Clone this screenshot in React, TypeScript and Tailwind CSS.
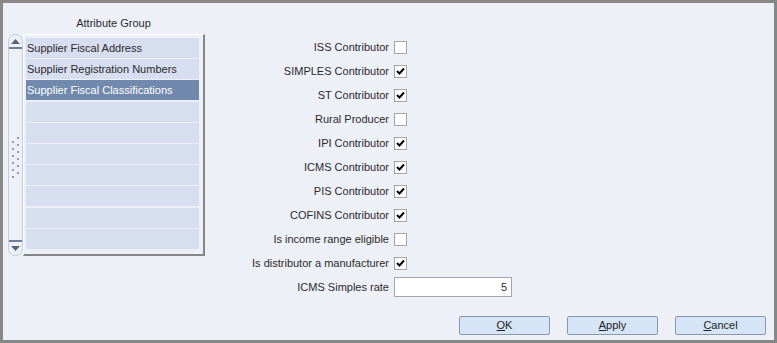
import React from "react";

const groups = [
  "Supplier Fiscal Address",
  "Supplier Registration Numbers",
  "Supplier Fiscal Classifications",
  "",
  "",
  "",
  "",
  "",
  "",
  "",
];

const fields: { label: string; checked: boolean }[] = [
  { label: "ISS Contributor", checked: false },
  { label: "SIMPLES Contributor", checked: true },
  { label: "ST Contributor", checked: true },
  { label: "Rural Producer", checked: false },
  { label: "IPI Contributor", checked: true },
  { label: "ICMS Contributor", checked: true },
  { label: "PIS Contributor", checked: true },
  { label: "COFINS Contributor", checked: true },
  { label: "Is income range eligible", checked: false },
  { label: "Is distributor a manufacturer", checked: true },
];

function CheckBox({ checked }: { checked: boolean }) {
  return (
    <div className="w-[13px] h-[13px] bg-white border border-[#a3a6ad] flex items-center justify-center">
      {checked && (
        <svg width="9" height="9" viewBox="0 0 9 9">
          <path d="M1 4 L3.5 6.5 L8 1.5" stroke="#000" strokeWidth="2" fill="none" />
        </svg>
      )}
    </div>
  );
}

function ScrollBar() {
  return (
    <div className="w-[15px] h-[222px] rounded-[7px] border border-[#c3cde0] bg-[#eef0f8] flex flex-col items-center">
      <div className="h-[14px] w-full flex items-center justify-center border-b-2 border-[#6f7f99]">
        <svg width="9" height="5" viewBox="0 0 9 5">
          <path d="M0 5 L4.5 0 L9 5 Z" fill="#5d6273" />
        </svg>
      </div>
      <div className="flex-1 flex items-center justify-center">
        <div className="flex flex-col gap-[5px] mt-[30px]">
          {[0, 1, 2, 3, 4, 5].map((i) => (
            <div key={i} className="flex gap-[3px]">
              <span className="w-[2px] h-[2px] bg-[#8a9ab8]" />
              <span className="w-[2px] h-[2px] bg-[#8a9ab8] -mt-[4px]" />
            </div>
          ))}
        </div>
      </div>
      <div className="h-[15px] w-full flex items-center justify-center border-t-2 border-[#6f7f99]">
        <svg width="9" height="5" viewBox="0 0 9 5">
          <path d="M0 0 L9 0 L4.5 5 Z" fill="#5d6273" />
        </svg>
      </div>
    </div>
  );
}

function Button({ u, rest }: { u: string; rest: string }) {
  return (
    <button className="w-[91px] h-[19px] bg-[#d5e5f7] border border-[#8b97ad] rounded-[2px] text-[11px] text-[#222] leading-none flex items-center justify-center">
      <span className="underline">{u}</span>
      {rest}
    </button>
  );
}

export default function App() {
  return (
    <div
      className="w-[777px] h-[343px] border-[3px] border-[#878787] bg-[#eef0f8] flex flex-col text-[#2a2a2a]"
      style={{ fontFamily: '"Liberation Sans", Arial, sans-serif' }}
    >
      <div className="flex flex-1">
        <div className="pl-[5px] pt-[14px] flex flex-col">
          <div className="h-[12px] text-[11px] leading-[12px] text-center pl-[14px]">Attribute Group</div>
          <div className="flex mt-[5px]">
            <ScrollBar />
            <div className="w-[182px] h-[222px] border-r-2 border-b-2 border-[#85868a] border-t border-l border-t-white border-l-white pl-[2px] pr-[4px] pt-[3px] flex flex-col gap-[1.2px]">
              {groups.map((g, i) => (
                <div
                  key={i}
                  className={
                    i === 2
                      ? "h-[20px] shrink-0 bg-[#7189ad] text-white text-[11px] leading-[20px] pl-[1px]"
                      : "h-[20px] shrink-0 bg-[#d7deef] text-[11px] leading-[20px] pl-[1px]"
                  }
                >
                  {g}
                </div>
              ))}
            </div>
          </div>
        </div>
        <div className="flex flex-col pt-[32px] ml-[6px]">
          {fields.map((f) => (
            <div key={f.label} className="h-[24px] flex items-center">
              <div className="w-[183px] text-right text-[11px] pr-[5px]">{f.label}</div>
              <CheckBox checked={f.checked} />
            </div>
          ))}
          <div className="h-[24px] flex items-center">
            <div className="w-[183px] text-right text-[11px] pr-[5px]">ICMS Simples rate</div>
            <div className="w-[118px] h-[20px] bg-white border border-[#a3a6ad] text-[11px] text-right pr-[4px] leading-[18px]">
              5
            </div>
          </div>
        </div>
      </div>
      <div className="flex justify-end gap-[17px] pr-[8px] pb-[5px]">
        <Button u="O" rest="K" />
        <Button u="A" rest="pply" />
        <Button u="C" rest="ancel" />
      </div>
    </div>
  );
}
